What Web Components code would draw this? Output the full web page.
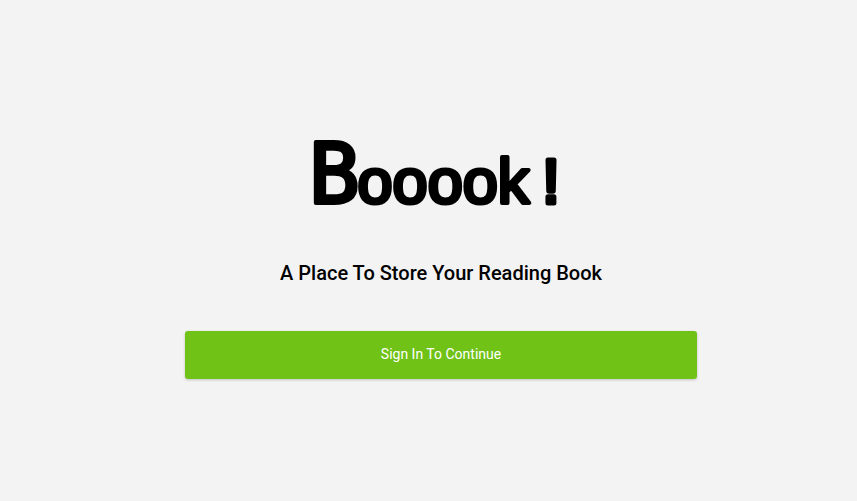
<!DOCTYPE html>
<html lang="en">
<head>
<meta charset="utf-8">
<meta name="viewport" content="width=device-width, initial-scale=1">
<title>Booook!</title>
<style>
  body { margin: 0; background: #f3f3f3; color: #000; font-family: Roboto, "Liberation Sans", sans-serif; }
</style>
</head>
<body>
<welcome-page>
  <book-logo></book-logo>
  <tag-line>A Place To Store Your Reading Book</tag-line>
  <action-button>Sign In To Continue</action-button>
</welcome-page>
<script>
class ShadowElement extends HTMLElement {
  constructor() {
    super();
    this.attachShadow({ mode: "open" }).innerHTML = this.constructor.markup;
  }
}
customElements.define("welcome-page", class extends ShadowElement {
  static markup = `<style>
    :host { display: block; }
    main { box-sizing: border-box; min-height: 100vh; padding: 17px 0 0 25px; display: flex; flex-direction: column; align-items: center; justify-content: center; gap: 42px; }
    ::slotted(action-button) { width: 100%; max-width: 512px; }
  </style><main><slot></slot></main>`;
});
customElements.define("book-logo", class extends ShadowElement {
  static markup = `<style>
    :host { display: block; }
    h1 { margin: 0; }
    svg { display: block; overflow: visible; }
    text { font: 400 63px "Liberation Sans", sans-serif; stroke: #000; stroke-width: 4px; stroke-linejoin: round; }
    .initial { font-family: "DejaVu Sans Mono", monospace; font-size: 84px; stroke-width: 4px; }
    .mark { stroke-width: 5px; }
  </style><h1><svg width="256" height="76" viewBox="0 0 256 76"><text x="-4" y="64"><tspan class="initial">B</tspan><tspan dx="-2">ooook</tspan><tspan class="mark" dx="13">!</tspan></text></svg></h1>`;
});
customElements.define("tag-line", class extends ShadowElement {
  static markup = `<style>
    :host { display: block; }
    h2 { margin: 0; font-size: 20px; line-height: 32px; font-weight: 500; text-align: center; }
  </style><h2><slot></slot></h2>`;
});
customElements.define("action-button", class extends ShadowElement {
  static markup = `<style>
    :host { display: block; }
    button { display: block; width: 100%; height: 48px; padding: 0 16px 2px; border: 0; border-radius: 3px; background: #70c217; color: #fff; font: 400 14px/20px Roboto, "Liberation Sans", sans-serif; box-shadow: 0 1px 3px rgba(0,0,0,.2); cursor: pointer; }
  </style><button type="button"><slot></slot></button>`;
});
</script>
</body>
</html>
